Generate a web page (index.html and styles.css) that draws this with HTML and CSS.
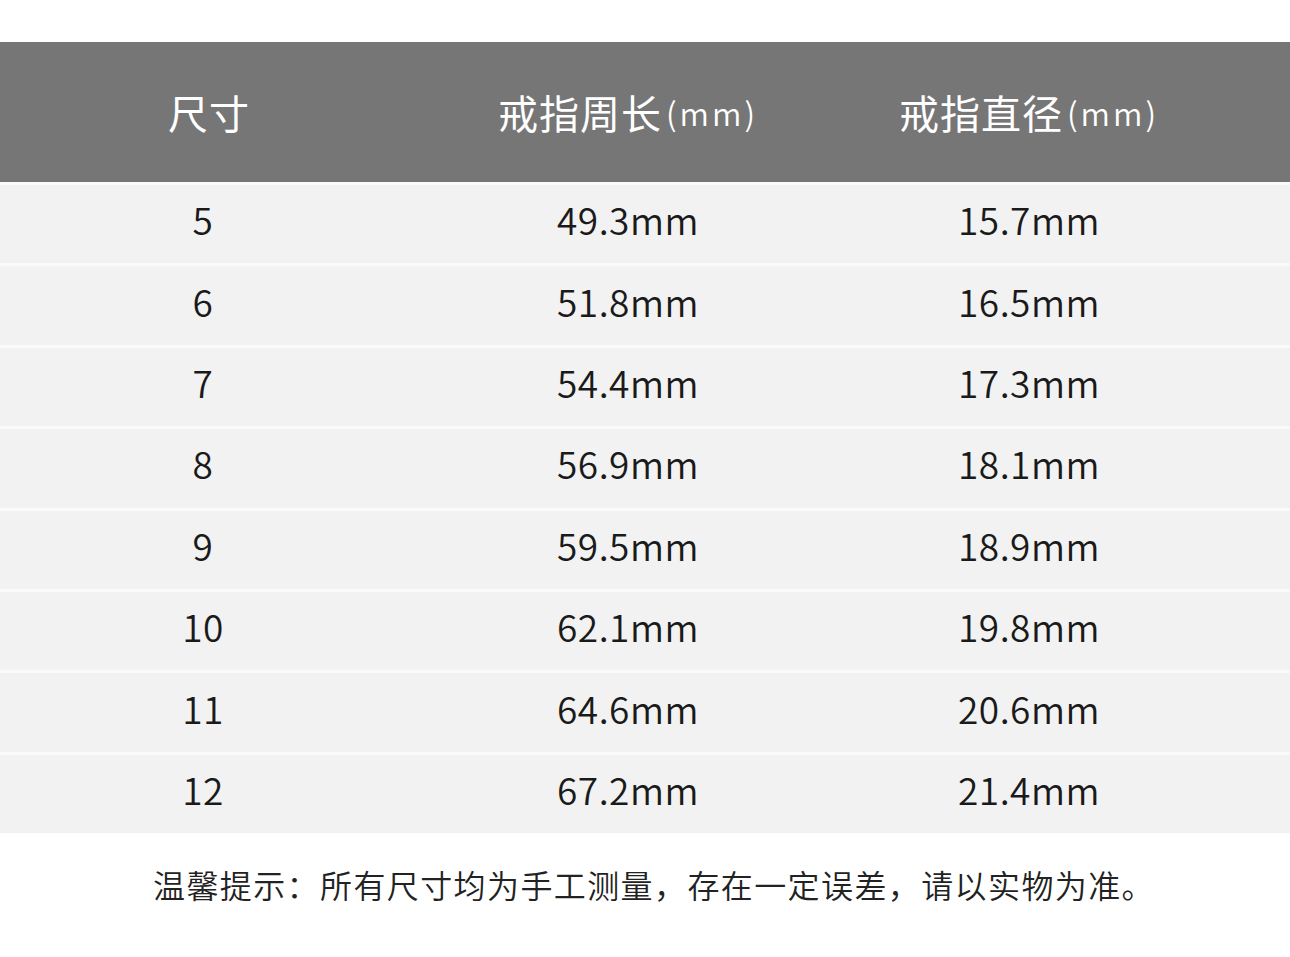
FILE: index.html
```html
<!DOCTYPE html>
<html lang="zh-CN">
<head>
<meta charset="utf-8">
<title>戒指尺寸表</title>
<link rel="stylesheet" href="styles.css">
</head>
<body>
<div class="page">
  <div class="table">
    <div class="row head">
      <div class="cell">尺寸</div>
      <div class="cell">戒指周长<span class="unit">(mm)</span></div>
      <div class="cell">戒指直径<span class="unit">(mm)</span></div>
    </div>
    <div class="row"><div class="cell">5</div><div class="cell">49.3mm</div><div class="cell">15.7mm</div></div>
    <div class="row"><div class="cell">6</div><div class="cell">51.8mm</div><div class="cell">16.5mm</div></div>
    <div class="row"><div class="cell">7</div><div class="cell">54.4mm</div><div class="cell">17.3mm</div></div>
    <div class="row"><div class="cell">8</div><div class="cell">56.9mm</div><div class="cell">18.1mm</div></div>
    <div class="row"><div class="cell">9</div><div class="cell">59.5mm</div><div class="cell">18.9mm</div></div>
    <div class="row"><div class="cell">10</div><div class="cell">62.1mm</div><div class="cell">19.8mm</div></div>
    <div class="row"><div class="cell">11</div><div class="cell">64.6mm</div><div class="cell">20.6mm</div></div>
    <div class="row"><div class="cell">12</div><div class="cell">67.2mm</div><div class="cell">21.4mm</div></div>
  </div>
  <p class="note">温馨提示：所有尺寸均为手工测量，存在一定误差，请以实物为准。</p>
</div>
</body>
</html>
```
FILE: styles.css
```css
html, body {
  margin: 0;
  padding: 0;
  background: #ffffff;
}
body {
  font-family: "Noto Sans CJK SC", "Noto Sans", sans-serif;
  color: #1a1a1a;
}
.page {
  width: 1290px;
  height: 957px;
  padding-top: 42px;
  box-sizing: border-box;
  overflow: hidden;
}
.table {
  display: flex;
  flex-direction: column;
}
.row {
  display: grid;
  grid-template-columns: 406px 444px 358px 1fr;
  align-items: center;
  height: 81.4px;
  background: #f2f2f2;
  border-top: 3px solid #fafafa;
  box-sizing: border-box;
  font-size: 37px;
  font-weight: 350;
  letter-spacing: 0.5px;
  line-height: 1;
}
.row .cell {
  text-align: center;
  padding-bottom: 9px;
}
.row.head {
  height: 140px;
  background: #767676;
  border-top: none;
  color: #ffffff;
  font-size: 40px;
  font-weight: 400;
  letter-spacing: 1px;
}
.row.head .cell {
  padding-bottom: 0;
}
.row.head .cell:first-child {
  padding-left: 12px;
}
.unit {
  font-size: 32px;
  font-weight: 350;
  letter-spacing: 3px;
  margin-left: 4px;
  position: relative;
  top: -3px;
}
.note {
  margin: 31px 0 0 0;
  padding-left: 153px;
  font-size: 32px;
  font-weight: 350;
  line-height: 40px;
  letter-spacing: 1.4px;
  color: #222222;
}
```
